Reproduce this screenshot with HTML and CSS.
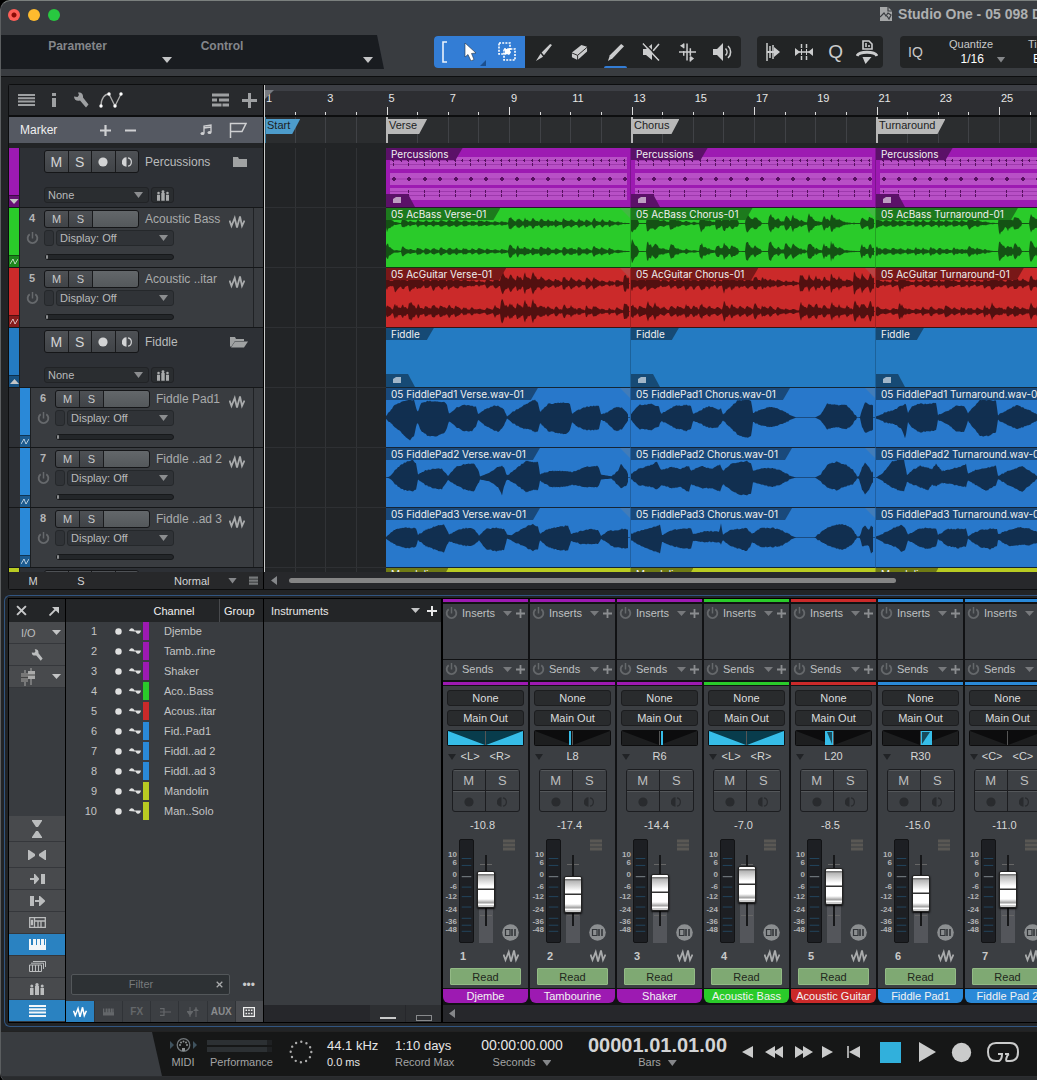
FILE: index.html
```
<!DOCTYPE html>
<html lang="en">
<head>
<meta charset="utf-8">
<title>Studio One - 05 098 D</title>
<link rel="stylesheet" href="styles.css">
</head>
<body>
<svg class="sprite" aria-hidden="true">
  <symbol id="lines" viewBox="0 0 17 12"><path d="M0 1h17M0 4.300h17M0 7.600h17M0 11h17" stroke="currentColor" stroke-width="2"/></symbol>
  <symbol id="bars3" viewBox="0 0 12 12"><path d="M0 2h12M0 6h12M0 10h12" stroke="currentColor" stroke-width="3"/></symbol>
  <symbol id="info" viewBox="0 0 6 16"><path d="M1 1h4v3H1zM1 6h4v9H1z" fill="currentColor"/></symbol>
  <symbol id="wrench" viewBox="0 0 16 16"><path d="M1 4.500 4.500 5 6 3 5 .5C8 0 10.500 2 10 5.500L15.500 12.500 13 15.500 7 8.500C4 9.500 1 8 1 4.500z" fill="currentColor"/></symbol>
  <symbol id="curve" viewBox="0 0 24 16"><path d="M2 14C2 6 6 2 10 2L16 14 22 2" fill="none" stroke="#aaa" stroke-width="1.300"/><g fill="#fff"><circle cx="2" cy="14" r="1.700"/><circle cx="10" cy="2" r="1.700"/><circle cx="16" cy="14" r="1.700"/><circle cx="22" cy="2" r="1.700"/></g></symbol>
  <symbol id="tracks" viewBox="0 0 17 14"><path d="M0 2h17M0 7h5M7 7h10M0 12h17" stroke="currentColor" stroke-width="3"/><path d="M10 10v4" stroke="#282a2d"/></symbol>
  <symbol id="plus" viewBox="0 0 12 12"><path d="M6 0v12M0 6h12" stroke="currentColor" stroke-width="2.400"/></symbol>
  <symbol id="minus" viewBox="0 0 12 12"><path d="M0 6h12" stroke="currentColor" stroke-width="2"/></symbol>
  <symbol id="notes" viewBox="0 0 12 12"><path d="M4 9V2l7-1v7M4 4l7-1" fill="none" stroke="currentColor" stroke-width="1.300"/><ellipse cx="2.500" cy="9.500" rx="2" ry="1.500" fill="currentColor"/><ellipse cx="9.500" cy="8.500" rx="2" ry="1.500" fill="currentColor"/></symbol>
  <symbol id="flag" viewBox="0 0 18 16"><path d="M1.500 16V1.500H17L13 9.500H2" fill="none" stroke="currentColor" stroke-width="1.500"/></symbol>
  <symbol id="folder" viewBox="0 0 18 12"><path d="M3 11V1h5l1 2h8v8z" fill="currentColor"/></symbol>
  <symbol id="folderopen" viewBox="0 0 18 12"><path d="M0 10V1h5l1 2h8v2H5L1 11z" fill="currentColor"/><path d="M5 5.500h13L14 11.500H1z" fill="currentColor"/></symbol>
  <symbol id="players" viewBox="0 0 14 12"><path d="M0 5h3.500v7H0zM5 3h4v9H5zM10.500 5H14v7h-3.500z" fill="currentColor"/><circle cx="1.800" cy="3" r="1.500" fill="currentColor"/><circle cx="7" cy="1.700" r="1.700" fill="currentColor"/><circle cx="12.200" cy="3" r="1.500" fill="currentColor"/></symbol>
  <symbol id="power" viewBox="0 0 14 14"><path d="M4 2.500a5.200 5.200 0 1 0 6 0" fill="none" stroke="currentColor" stroke-width="2"/><path d="M7 0v7" stroke="currentColor" stroke-width="1.600"/></symbol>
  <symbol id="wave" viewBox="0 0 16 14"><path d="M.5 5.500 2.500 11 5.700 3 8 12.500 11 1.500 13 11 15.500 5.500" fill="none" stroke="currentColor" stroke-width="1.800"/></symbol>
  <symbol id="env" viewBox="0 0 8 7"><path d="M0 6 3 1 5 6 8 1" fill="none" stroke="currentColor"/></symbol>
  <symbol id="dot" viewBox="0 0 10 10"><circle cx="5" cy="5" r="4.600" fill="currentColor"/></symbol>
  <symbol id="monitor" viewBox="0 0 10 10"><path d="M4.500.3a4.700 4.700 0 0 0 0 9.400z" fill="currentColor"/><path d="M6 .8a4.300 4.300 0 0 1 0 8.400" fill="none" stroke="currentColor" stroke-width="1.200"/></symbol>
  <symbol id="sine" viewBox="0 0 12 8"><path d="M0 4C1 .5 4 .5 5.500 3.500H12C11 8 8 7.500 6.500 4.500H5z" fill="currentColor"/></symbol>
  <symbol id="close" viewBox="0 0 10 10"><path d="M1 1l8 8M9 1 1 9" stroke="currentColor" stroke-width="1.800"/></symbol>
  <symbol id="popout" viewBox="0 0 10 10"><path d="M.5 9.500 7 3" stroke="currentColor" stroke-width="1.800"/><path d="M3 1h7v6.500z" fill="currentColor"/></symbol>
  <symbol id="faders" viewBox="0 0 14 18"><path d="M4 2v16M10 0v17" stroke="#999" stroke-width="1.200"/><path d="M0 5h7v9H0z" fill="#777"/><path d="M7 3h7v8H7z" fill="#aaa"/><path d="M0 9.500h7M7 7h7" stroke="#444"/></symbol>
  <symbol id="vshrink" viewBox="0 0 10 18"><path d="M0 0h10v1L6 7H4L0 1zM0 18h10v-1l-4-6H4l-4 6z" fill="currentColor"/></symbol>
  <symbol id="hshrink" viewBox="0 0 18 10"><path d="M0 0v10h1l6-4V4L1 0zM18 0v10h-1l-6-4V4l6-4z" fill="currentColor"/></symbol>
  <symbol id="inport" viewBox="0 0 15 10"><path d="M0 4h4V0h1l4 4.500v1L5 10H4V6H0zM11 0h4v10h-4z" fill="currentColor"/></symbol>
  <symbol id="outport" viewBox="0 0 15 10"><path d="M0 0h4v10H0zM5 4h4V0h1l5 4.500v1L10 10H9V6H5z" fill="currentColor"/></symbol>
  <symbol id="console" viewBox="0 0 17 11"><path d="M.7.7h15.600v9.600H.7zM5.500 1v9M6 4h10M9 4v6M12 4v6M2.500 3.500h1v4h-1z" fill="none" stroke="currentColor" stroke-width="1.300"/></symbol>
  <symbol id="keys" viewBox="0 0 17 11"><path d="M0 0h2v6h2V0h3v6h1V0h3v6h1V0h3v6h1V0h1v11H0z" fill="currentColor"/></symbol>
  <symbol id="stack" viewBox="0 0 17 11"><path d="M.5 4h12v6.500H.5zM3.500 4v6M6.500 4v6M9.500 4v6M2 2.200h12.500V8M4 .5h12.500V6" fill="none" stroke="currentColor"/></symbol>
  <symbol id="bus" viewBox="0 0 12 8"><path d="M1 .7h4v6.600H1M1 4h11" fill="none" stroke="currentColor" stroke-width="1.200"/></symbol>
  <symbol id="vca" viewBox="0 0 12 10"><path d="M3 0v10M9 0v10" stroke="currentColor"/><path d="M0 5h6L3 9zM6 4h6L9 1zM0 4h6v1H0z" fill="currentColor"/></symbol>
  <symbol id="grid" viewBox="0 0 12 10"><path d="M.6.600h10.800v8.800H.6z" fill="none" stroke="currentColor" stroke-width="1.200"/><path d="M2.500 3.300h7M2.500 6.500h7" stroke="currentColor" stroke-width="1.600" stroke-dasharray="1.600 1.100"/></symbol>
  <symbol id="link" viewBox="0 0 17 17"><circle cx="8.500" cy="8.500" r="8.300" fill="#8b8e90"/><path d="M3.500 5.500H8v6H3.500z" fill="none" stroke="#33363a" stroke-width="1.200"/><path d="M10 5v7M13 5v7" stroke="#33363a" stroke-width="1.600"/></symbol>
  <symbol id="doc" viewBox="0 0 12 14"><path d="M0 0h8l4 4v10H0z" fill="#a5a7a8"/><path d="M8 0v4h4M0 10l4-4 2 3 2-3 3 2-2 4-2-3" fill="none" stroke="#393c40" stroke-width="1.200"/></symbol>
  <symbol id="bracket" viewBox="0 0 6 22"><path d="M6 1H2v20h4" fill="none" stroke="currentColor" stroke-width="1.600"/></symbol>
  <symbol id="pointer" viewBox="0 0 12 18"><path d="M1 0v14l3-2.500L7 18l3-1.500L7.500 10.500 12 10z" fill="#fff" stroke="#234" stroke-width=".6"/></symbol>
  <symbol id="range" viewBox="0 0 18 20"><path d="M1 1h11v11H1zM6 7h11v11H6z" fill="none" stroke="#fff" stroke-width="1.600" stroke-dasharray="2 1.200"/><path d="M7 7h5v5H7z" fill="#fff"/></symbol>
  <symbol id="knife" viewBox="0 0 18 18"><path d="M18 1 16 0 7 9l2.500 3zM6 10 1 18l7.500-4.500z" fill="currentColor"/></symbol>
  <symbol id="eraser" viewBox="0 0 18 18"><path d="M11 1 17 3v5L7 17 1 14V9z" fill="currentColor"/><path d="M1 9.500 7 12 17 3.500M7 12v5" fill="none" stroke="#222" stroke-width="1"/></symbol>
  <symbol id="pencil" viewBox="0 0 18 18"><path d="M15 0l3 2.500L6 15l-5 3 2-6z" fill="currentColor"/></symbol>
  <symbol id="mute" viewBox="0 0 18 18"><path d="M1 6h3l6-5v16l-6-5H1z" fill="currentColor"/><path d="M17 1 11 8M1 .5l16 17" stroke="currentColor" stroke-width="1.600"/><path d="M2.500 0 18 16" stroke="#222" stroke-width="1.400"/></symbol>
  <symbol id="bend" viewBox="0 0 18 20"><path d="M0 10h18M5 1v5M5 9v5M8.500 1v18M12 6v8M12 15v5" stroke="currentColor" stroke-width="1.600"/><path d="M5 1v5L1 3.500zM12 14v6l4-3zM14 9v3" fill="currentColor"/></symbol>
  <symbol id="speaker" viewBox="0 0 20 18"><path d="M0 6h4l6-6v18l-6-6H0z" fill="currentColor"/><path d="M12.500 5.500c2 2 2 5 0 7M15 3c3.500 3 3.500 9 0 12" fill="none" stroke="currentColor" stroke-width="1.600"/></symbol>
  <symbol id="stripsil" viewBox="0 0 14 18"><path d="M1 0v18M4 3v12M7 2v14" stroke="currentColor" stroke-width="1.500"/><path d="M1 8h12v2H1zM8 4l6 5-6 5z" fill="currentColor"/></symbol>
  <symbol id="stretch" viewBox="0 0 18 18"><path d="M0 9h18M6.500 1v4M6.500 13v4M11.500 1v4M11.500 13v4" stroke="currentColor" stroke-width="1.500"/><path d="M0 5l5 4-5 4zM18 5l-5 4 5 4z" fill="currentColor"/><path d="M6.500 6v6M11.500 6v6" stroke="currentColor"/></symbol>
  <symbol id="macro" viewBox="0 0 22 24"><path d="M7 1h6l3 3v5H7zM10 3v4M13 5v2" fill="none" stroke="currentColor" stroke-width="1.600"/><path d="M1 16c2-5 18-5 20 0" fill="none" stroke="currentColor" stroke-width="3"/><path d="M6.500 17h9l-6 7z" fill="currentColor"/></symbol>
  <symbol id="din" viewBox="0 0 27 14"><path d="M0 3v8l4-4zM23 3v8l4-4z" fill="#3f525e"/><circle cx="13.500" cy="7" r="6.300" fill="none" stroke="#70767a" stroke-width="1.300"/><g fill="#8b9092"><circle cx="10" cy="7" r="1"/><circle cx="11" cy="4.500" r="1"/><circle cx="13.500" cy="3.500" r="1"/><circle cx="16" cy="4.500" r="1"/><circle cx="17" cy="7" r="1"/><path d="M12 10h3v3h-3z"/></g></symbol>
  <symbol id="prev" viewBox="0 0 11 12"><path d="M0 6 11 0v12z" fill="currentColor"/></symbol>
  <symbol id="next" viewBox="0 0 11 12"><path d="M11 6 0 0v12z" fill="currentColor"/></symbol>
  <symbol id="rew" viewBox="0 0 18 12"><path d="M0 6 10 0v5l8-5v12l-8-5v5z" fill="currentColor"/></symbol>
  <symbol id="fwd" viewBox="0 0 18 12"><path d="M18 6 8 0v5L0 0v12l8-5v5z" fill="currentColor"/></symbol>
  <symbol id="rtz" viewBox="0 0 13 12"><path d="M1 0v12" stroke="currentColor" stroke-width="1.600"/><path d="M2 6 13 0v12z" fill="currentColor"/></symbol>
  <symbol id="play" viewBox="0 0 17 20"><path d="M0 0 17 10 0 20z" fill="currentColor"/></symbol>
  <symbol id="loop" viewBox="0 0 32 20"><path d="M9 19C3 19 1 15 1 10s2-9 8-9h14c6 0 8 4 8 9s-2 9-8 9h-3c-2 0 0-6 2-7M9 19h3c2-1 3-3 3-7h-4M22 12l-4 0" fill="none" stroke="currentColor" stroke-width="2"/></symbol>
</svg>

<div class="window">
  <header class="titlebar">
    <button class="light red" aria-label="Close"></button><button class="light amber" aria-label="Minimise"></button><button class="light lime" aria-label="Zoom"></button>
    <h1 class="title"><svg width="12" height="14"><use href="#doc"/></svg>Studio One - 05 098 D</h1>
  </header>

  <div class="toolbar">
    <div class="params">
      <button class="param"><span>Parameter</span><i class="tri"></i></button>
      <button class="param wide"><span>Control</span><i class="tri"></i></button>
    </div>
    <div class="tools" role="toolbar" aria-label="Tools">
      <div class="selected">
        <svg width="6" height="22"><use href="#bracket"/></svg>
        <button aria-label="Arrow"><svg width="12" height="18"><use href="#pointer"/></svg></button>
        <button aria-label="Range"><svg width="18" height="20"><use href="#range"/></svg></button>
      </div>
      <button aria-label="Split"><svg width="17" height="17"><use href="#knife"/></svg></button>
      <button aria-label="Eraser"><svg width="17" height="17"><use href="#eraser"/></svg></button>
      <button class="paint" aria-label="Paint"><svg width="17" height="17"><use href="#pencil"/></svg></button>
      <button aria-label="Mute"><svg width="18" height="18"><use href="#mute"/></svg></button>
      <button aria-label="Bend"><svg width="17" height="20"><use href="#bend"/></svg></button>
      <button aria-label="Listen"><svg width="20" height="18"><use href="#speaker"/></svg></button>
    </div>
    <div class="tools narrow" role="toolbar" aria-label="Actions">
      <button aria-label="Strip silence"><svg width="14" height="18"><use href="#stripsil"/></svg></button>
      <button aria-label="Stretch"><svg width="18" height="18"><use href="#stretch"/></svg></button>
      <button class="letter">Q</button>
      <button aria-label="Macro"><svg width="22" height="24"><use href="#macro"/></svg></button>
    </div>
    <div class="quantize">
      <button class="iq">IQ</button>
      <label class="q"><span>Quantize</span><span class="pick"><select><option>1/16</option></select><i class="tri dim"></i></span></label>
      <label class="tb"><span>Timebase</span><select><option>Beats</option></select></label>
    </div>
  </div>

  <main class="workspace">
    <section class="arrange" aria-label="Arrangement">
      <div class="tracklist">
        <div class="listtools">
          <button aria-label="Track list"><svg width="17" height="12"><use href="#lines"/></svg></button>
          <button aria-label="Inspector"><svg width="6" height="16"><use href="#info"/></svg></button>
          <button aria-label="Options"><svg width="16" height="16"><use href="#wrench"/></svg></button>
          <button aria-label="Automation"><svg width="24" height="16"><use href="#curve"/></svg></button>
          <button class="push" aria-label="Layers"><svg width="17" height="14"><use href="#tracks"/></svg></button>
          <button aria-label="Add tracks"><svg width="15" height="15"><use href="#plus"/></svg></button>
        </div>
        <div class="markerhead">
          <span>Marker</span>
          <button aria-label="Add marker"><svg width="11" height="11"><use href="#plus"/></svg></button>
          <button aria-label="Remove marker"><svg width="11" height="11"><use href="#minus"/></svg></button>
          <button class="push" aria-label="Tempo"><svg width="12" height="12"><use href="#notes"/></svg></button>
          <button aria-label="Markers"><svg width="18" height="16"><use href="#flag"/></svg></button>
        </div>
        <div class="heads" id="heads"></div>
        <div class="listfoot">
          <button>M</button><button>S</button>
          <label class="size"><select aria-label="Track height"><option>Normal</option></select><i class="tri dim"></i></label>
          <svg width="9" height="9"><use href="#bars3"/></svg>
        </div>
      </div>
      <div class="timeline">
        <div class="ruler" id="ruler"></div>
        <div class="markers" id="markers"></div>
        <div class="lanes" id="lanes"></div>
        <div class="playhead"></div>
        <div class="hscroll"><button aria-label="Scroll left"><i class="tri left"></i></button><div class="thumb"></div></div>
      </div>
    </section>

    <section class="frame" aria-label="Console">
      <div class="mix">
        <nav class="side">
          <div class="sidehead"><button aria-label="Close"><svg width="11" height="11"><use href="#close"/></svg></button><button aria-label="Detach"><svg width="10" height="10"><use href="#popout"/></svg></button></div>
          <button class="sb"><span>I/O</span><i class="tri small"></i></button>
          <button class="sb mid" aria-label="Options"><svg width="12" height="12"><use href="#wrench"/></svg></button>
          <button class="sb" aria-label="Fader view"><svg width="14" height="18"><use href="#faders"/></svg><i class="tri small"></i></button>
          <button class="sb mid tall push-down" aria-label="Narrow"><svg width="10" height="18"><use href="#vshrink"/></svg></button>
          <button class="sb mid tall" aria-label="Width"><svg width="18" height="10"><use href="#hshrink"/></svg></button>
          <button class="sb mid" aria-label="Inputs"><svg width="15" height="10"><use href="#inport"/></svg></button>
          <button class="sb mid" aria-label="Outputs"><svg width="15" height="10"><use href="#outport"/></svg></button>
          <button class="sb mid" aria-label="External"><svg width="17" height="11"><use href="#console"/></svg></button>
          <button class="sb mid on" aria-label="Instruments"><svg width="17" height="11"><use href="#keys"/></svg></button>
          <button class="sb mid" aria-label="Groups"><svg width="17" height="11"><use href="#stack"/></svg></button>
          <button class="sb mid" aria-label="Scenes"><svg width="14" height="12"><use href="#players"/></svg></button>
          <button class="sb mid on" aria-label="Channel list"><svg width="17" height="12"><use href="#lines"/></svg></button>
        </nav>
        <div class="channels">
          <table>
            <colgroup><col class="c-num"><col class="c-tick"><col class="c-dot"><col class="c-wave"><col class="c-col"><col class="c-name"><col class="c-group"></colgroup>
            <thead><tr><th colspan="6">Channel</th><th class="grp">Group</th></tr></thead>
            <tbody id="rows"></tbody>
          </table>
          <div class="filter"><div class="field"><input type="text" placeholder="Filter" aria-label="Filter"><button aria-label="Clear"><svg width="7" height="7"><use href="#close"/></svg></button></div><button class="more" aria-label="More">•••</button></div>
          <div class="tabs">
            <button class="on" aria-label="Audio"><svg width="14" height="12"><use href="#wave"/></svg></button>
            <button aria-label="Instrument"><svg width="11" height="8"><use href="#keys"/></svg></button>
            <button>FX</button>
            <button aria-label="Bus"><svg width="12" height="8"><use href="#bus"/></svg></button>
            <button aria-label="VCA"><svg width="12" height="10"><use href="#vca"/></svg></button>
            <button class="aux">AUX</button>
            <button class="lit" aria-label="All"><svg width="12" height="10"><use href="#grid"/></svg></button>
          </div>
        </div>
        <div class="instruments">
          <div class="insthead"><span>Instruments</span><button aria-label="Menu"><i class="tri small"></i></button><button aria-label="Add"><svg width="10" height="10"><use href="#plus"/></svg></button></div>
          <div class="instfoot"><button aria-label="Compact"><i class="dash"></i></button><button aria-label="Expanded"><i class="box"></i></button></div>
        </div>
        <div class="stripsarea">
          <div class="strips" id="strips"></div>
          <div class="stripscroll"><button aria-label="Scroll left"><i class="tri left"></i></button></div>
        </div>
      </div>
    </section>
  </main>

  <footer class="transport">
    <div class="tbody">
      <div class="cell midi"><svg width="27" height="14"><use href="#din"/></svg><span>MIDI</span></div>
      <div class="cell perf"><i class="meter"></i><i class="meter"></i><span>Performance</span></div>
      <svg class="ring" width="24" height="24" viewBox="0 0 24 24"><circle cx="12" cy="12" r="10.300" fill="none" stroke="#aaa" stroke-width="2.400" stroke-linecap="round" stroke-dasharray="0 5.393"/></svg>
      <div class="cell rate"><b>44.1 kHz</b><em>0.0 ms</em></div>
      <div class="cell days"><b>1:10 days</b><span>Record Max</span></div>
      <div class="cell secs"><b>00:00:00.000</b><span>Seconds<i class="tri dim"></i></span></div>
      <div class="cell time"><b>00001.01.01.00</b><span>Bars<i class="tri dim"></i></span></div>
      <div class="controls">
        <button aria-label="Previous"><svg width="11" height="12"><use href="#prev"/></svg></button>
        <button aria-label="Rewind"><svg width="18" height="12"><use href="#rew"/></svg></button>
        <button aria-label="Forward"><svg width="18" height="12"><use href="#fwd"/></svg></button>
        <button aria-label="Next"><svg width="11" height="12"><use href="#next"/></svg></button>
        <button aria-label="Return to zero"><svg width="13" height="12"><use href="#rtz"/></svg></button>
        <button class="stop" aria-label="Stop"></button>
        <button aria-label="Play"><svg width="17" height="20"><use href="#play"/></svg></button>
        <button class="rec" aria-label="Record"><svg width="21" height="21"><use href="#dot"/></svg></button>
        <button class="rec" aria-label="Loop"><svg width="32" height="20"><use href="#loop"/></svg></button>
      </div>
    </div>
  </footer>
</div>
<script src="app.js"></script>
</body>
</html>
```

FILE: styles.css
```
:root {
  --bar: calc(245px / 8);
  --panel: #393c40;
  --dark: #232527;
  --line: #0d0e0f;
}
* { box-sizing: border-box; }
body { margin: 0; background: #000; color: #c8c9ca; font: 11px/14px "Liberation Sans", Arial, sans-serif; }
button, select, input { font: inherit; color: inherit; background: none; border: 0; padding: 0; margin: 0; border-radius: 0; appearance: none; outline: 0; }
button { display: flex; align-items: center; justify-content: center; }
svg { display: block; flex: none; }
.sprite { position: absolute; width: 0; height: 0; }
table { border-collapse: collapse; table-layout: fixed; width: 100%; }

.window { display: flex; flex-direction: column; min-height: 100vh; overflow: hidden; background: var(--panel); border-top: 1px solid #7b807e; border-left: 1px solid #5b5e60; border-radius: 10px 0 0 10px; }
.tri { display: inline-block; flex: none; width: 10px; height: 6px; background: #c4c5c6; clip-path: polygon(0 0, 100% 0, 50% 100%); }
.tri.small { width: 9px; height: 5px; }
.tri.dim { width: 9px; height: 6px; background: #85878a; }
.tri.left { width: 6px; height: 9px; background: #85878a; clip-path: polygon(100% 0, 100% 100%, 0 50%); }

/* title bar and tools */
.titlebar { display: flex; align-items: center; height: 27px; padding-left: 7px; gap: 8px; overflow: hidden; }
.light { width: 12px; height: 12px; border-radius: 50%; }
.red { background: radial-gradient(circle, #8b0b06 2px, #fe5e57 3px); }
.amber { background: #febb2e; }
.lime { background: #28c840; }
.title { display: flex; align-items: center; gap: 6px; margin: 0 -5px 0 auto; padding-bottom: 2px; font-size: 14px; line-height: 16px; color: #aeb0b1; white-space: nowrap; }
.toolbar { display: flex; align-items: center; height: 48px; overflow: hidden; }
.params { display: flex; flex: none; width: 383px; height: 34px; margin-right: 50px; background: #191c20; clip-path: polygon(0 0, 376px 0, 100% 100%, 0 100%); }
.param { position: relative; align-items: flex-start; width: 153px; padding-top: 4px; font-size: 12px; font-weight: bold; color: #84868a; }
.param.wide { width: 136px; }
.param .tri { position: absolute; right: -18px; bottom: 6px; }
.param.wide .tri { right: -83px; }
.tools { display: flex; flex: none; height: 32px; margin-right: 16px; background: #222425; border-radius: 4px; overflow: hidden; color: #cbcccd; }
.tools button { width: 36px; }
.selected { display: flex; align-items: center; width: 91px; padding-left: 7px; background: #337dd5; color: #eaf2fb; position: relative; }
.selected::after { content: ""; position: absolute; left: 46px; bottom: 2px; width: 6px; height: 6px; background: #1c4f8d; clip-path: polygon(100% 0, 100% 100%, 0 100%); }
.selected button { width: 37px; height: 32px; }
.selected button:nth-of-type(1) { margin-left: 4px; }
.paint { position: relative; }
.paint::after { content: ""; position: absolute; left: 7px; right: 6px; bottom: 0; height: 2px; background: #337dd5; border-radius: 2px 2px 0 0; }
.tools.narrow { width: 126px; margin-right: 17px; }
.tools.narrow button { flex: 1; }
.tools .letter { font-size: 19px; }
.quantize { display: flex; flex: 1; min-width: 0; align-items: center; height: 32px; background: #222425; border-radius: 4px 0 0 4px; overflow: hidden; }
.iq { flex: none; width: 31px; font-size: 14px; }
.q { display: flex; flex: none; flex-direction: column; align-items: center; width: 80px; line-height: 15px; }
.pick { display: flex; align-items: center; gap: 12px; padding-left: 24px; }
.q select { height: 15px; width: 24px; font-size: 12px; color: #fff; }
.tb { display: flex; flex: none; flex-direction: column; width: 60px; margin-left: 17px; line-height: 15px; }
.tb select { height: 15px; padding-left: 5px; font-size: 12px; color: #fff; }

/* arrangement */
.workspace { display: flex; flex-direction: column; flex: 1; padding-top: 7px; background: #222426; border-top: 1px solid var(--line); }
.arrange { display: grid; grid-template-columns: 255px minmax(0, 1fr); margin-left: 7px; border: 1px solid var(--line); border-right: 0; border-radius: 3px 0 0 3px; }
.tracklist { border-right: 1px solid #000; }
.listtools { display: flex; align-items: center; gap: 16px; height: 30px; padding: 0 6px 0 9px; background: #282a2d; color: #9ea0a2; }
.listtools button:nth-child(4) { margin-left: -6px; }
.listtools .push, .markerhead .push { margin-left: auto; }
.listtools button:nth-child(6) { margin-left: -3px; }
.markerhead { display: flex; align-items: center; gap: 14px; height: 28px; margin-bottom: 5px; padding: 0 16px 0 11px; border-top: 2px solid var(--line); background: #555962; color: #cfd0d2; }
.markerhead span { width: 66px; font-size: 12px; color: #f0f0f0; }
.markerhead button:nth-of-type(4) { margin-left: 3px; }
.heads { height: 424px; overflow: hidden; background: #2d3035; }
.head { display: grid; grid-template-columns: 10px minmax(0, 1fr); height: 60px; border-bottom: 1px solid #151719; }
.head.child { padding-left: 11px; }
.strip-col { display: flex; flex-direction: column; justify-content: flex-end; }
.strip-col > span { display: flex; align-items: center; justify-content: center; height: 12px; border-top: 1px solid #0006; background: #0005; color: #fffa; }
.up { transform: rotate(180deg); }
.hbody { display: grid; grid-template-columns: 24px 95px minmax(0, 1fr); align-content: start; border-left: 1px solid #1c1e20; }
.head.audio .hbody { background: linear-gradient(90deg, var(--panel) 0 calc(100% - 10px), #202225 0 calc(100% - 9px), var(--panel) 0); }
.num { padding-top: 3px; text-align: center; font-weight: bold; color: #b4b5b6; }
.msr { display: grid; margin-top: 2px; height: 18px; grid-template-columns: 23px 23px 1fr; border: 1px solid #151618; border-radius: 3px; background: #1a1b1d; gap: 1px; overflow: hidden; color: #c9cacb; }
.msr > * { background: linear-gradient(#4e5155, #404347); }
.msr .lvl { background: linear-gradient(#63676a, #54585b); }
.group .msr { height: 23px; grid-template-columns: repeat(4, 1fr); font-size: 14px; color: #d3d4d5; }
.nm { display: flex; align-items: center; justify-content: space-between; height: 22px; padding: 0 18px 0 6px; font-size: 12px; color: #a9abac; white-space: nowrap; }
.group .nm { height: 27px; padding-right: 15px; color: #b9bbbc; }
.group .nm svg { color: #a0a2a3; }
.audio .nm svg { margin-top: 6px; }
.pw { margin-top: 1px; color: #66696c; justify-self: center; }
.under { grid-column: 2 / 4; display: grid; grid-template-columns: 10px minmax(0, 1fr); gap: 2px; height: 16px; margin: 0 89px 0 0; }
.under > * { border: 1px solid #25282b; border-radius: 3px; background: #303337; }
.drop { display: flex; align-items: center; padding: 0 5px 0 3px; color: #b9babb; }
.drop select { flex: 1; min-width: 0; height: 14px; }
.drop .tri { background: #8b8d8f; }
.group .under { grid-template-columns: minmax(0, 1fr) 23px; margin-top: 12px; }
.group .under > button { color: #a9abac; }
.group .under > * { background: #2a2d30; border-color: #212326; }
.vol { grid-column: 2 / 4; height: 6px; margin: 8px 89px 0 1px; border: 1px solid #17191b; border-radius: 3px; background: #232629; }
.vol::-webkit-slider-thumb { appearance: none; width: 2px; height: 4px; background: #8b8d8f; border-radius: 1px; }
.listfoot { display: flex; align-items: center; height: 17px; background: #27282a; color: #d3d4d5; }
.listfoot button { flex: none; width: 48px; }
.listfoot svg { margin-left: 12px; color: #77797b; }
.size { display: flex; align-items: center; margin-left: 69px; gap: 14px; }
.size select { height: 14px; width: 40px; }
.timeline { position: relative; display: flex; flex-direction: column; min-width: 0; overflow: hidden; background: #222426; }
.playhead { position: absolute; left: 0; top: 0; bottom: 17px; width: 1px; background: #c9caca; }
.playhead::before { content: ""; position: absolute; left: 1px; top: 5px; width: 9px; height: 9px; background: #777a80; clip-path: polygon(0 0, 100% 0, 0 100%); }
.ruler { display: flex; height: 30px; border-top: 6px solid #3d3f45; background: #2d2e32; }
.bar2 { flex: none; width: calc(var(--bar) * 2); padding: 0 0 0 2px; font-size: 11px; color: #e6e6e6;
  background: linear-gradient(#ddd, #ddd) 0 100% / 1px 3px no-repeat, linear-gradient(#ddd, #ddd) var(--bar) 100% / 1px 3px no-repeat; }
.bar2.long { background-size: 1px 8px, 1px 3px; }
.markers { display: flex; height: 28px; margin-bottom: 5px; border-top: 2px solid var(--line); background: repeating-linear-gradient(90deg, #404246 0 1px, #2b2d2f 1px var(--bar)); }
.mk { flex: none; width: 245px; border-left: 2px solid #b7b7b7; padding-top: 1px; }
.mk.start { width: 122px; border-color: #2f7397; }
.mk span { display: inline-block; height: 15px; padding: 0 10px 0 1px; line-height: 13px; background: #b8b8b8; color: #1d1e1f; clip-path: polygon(0 0, 100% 0, calc(100% - 8px) 100%, 0 100%); }
.mk.start span { background: #4d9ccb; }
.lanes { height: 424px; overflow: hidden; background: repeating-linear-gradient(90deg, #313336 0 1px, transparent 1px var(--bar)); }
.lane { display: flex; height: 60px; padding-left: 122px; border-bottom: 1px solid #2e3033; }
.clip { position: relative; flex: none; width: 245px; height: 60px; overflow: hidden; border-right: 1px solid #0003; border-bottom: 1px solid #111c; font: 10px/12px Inter, sans-serif; color: #f1f1f1; white-space: nowrap; }
.clip svg { position: absolute; left: 0; top: 0; }
.clip b { position: relative; display: inline-block; height: 12px; padding: 0 14px 0 5px; font-weight: 400; clip-path: polygon(0 0, 100% 0, calc(100% - 7px) 100%, 0 100%); }
.ftab { position: absolute; left: 0; bottom: 0; width: 29px; height: 13px; clip-path: polygon(0 0, 22px 0, 29px 100%, 0 100%); }
.ftab::after { content: ""; position: absolute; left: 7px; top: 3px; width: 8px; height: 6px; background: #fff9; clip-path: polygon(0 2px, 3px 0, 100% 0, 100% 100%, 0 100%); }
.hscroll { display: flex; align-items: center; height: 17px; padding-left: 7px; background: #27282b; }
.thumb { width: 607px; height: 5px; margin-left: 12px; border-radius: 3px; background: #858585; }

/* console */
.frame { display: flex; flex: 1; margin: 5px 0 4px 3px; padding: 2px 0 3px 3px; border: 1px solid #315580; border-right: 0; border-radius: 6px 0 0 6px; }
.mix { flex: 1; display: grid; grid-template-columns: 56px 197px 177px minmax(0, 1fr); column-gap: 1px; border: 1px solid #000; border-right: 0; background: #000; }
.side { display: flex; flex-direction: column; background: var(--panel); }
.sidehead { display: flex; align-items: center; justify-content: space-between; height: 23px; padding: 0 6px 0 7px; background: var(--dark); }
.sb { justify-content: space-between; height: 22px; padding: 0 4px 0 12px; border-bottom: 1px solid #35373b; background: #484a4d; color: #bbbdbe; }
.sb.mid { justify-content: center; padding: 0; }
.sb.tall { height: 26px; }
.sb.on { background: #2a82c1; color: #f2f6f9; }
.push-down { margin-top: auto; }
.channels { display: flex; flex-direction: column; background: var(--panel); }
.channels th { height: 23px; padding: 0 24px 0 0; text-align: right; font-weight: 400; color: #f0f0f0; background: var(--dark); }
.channels th.grp { padding: 0 4px 0 0; text-align: center; border-left: 1px solid #484a4d; }
.c-num { width: 31px; } .c-tick { width: 12px; } .c-dot { width: 18px; } .c-wave { width: 16px; } .c-col { width: 6px; } .c-name { width: 70px; } .c-group { width: 44px; }
.channels td { height: 20px; padding: 0 0 2px; color: #c3c4c5; }
.channels td:first-child { text-align: right; }
.channels td svg { margin: auto; color: #dfe0e0; }
.channels td i { display: block; height: 18px; }
.channels td.name { padding-left: 15px; }
.filter { display: flex; align-items: center; margin-top: auto; padding: 0 8px 6px 5px; }
.field { display: flex; align-items: center; width: 159px; height: 21px; border: 1px solid #53575a; border-radius: 2px; background: #2d3134; }
.field input { flex: 1; width: 0; height: 17px; padding-bottom: 2px; text-align: center; }
.field input::placeholder { color: #777a7c; opacity: 1; }
.field button { width: 19px; color: #a9abac; }
.more { margin-left: auto; font-size: 12px; }
.tabs { display: grid; grid-template-columns: 28px repeat(6, 1fr); gap: 1px; height: 21px; background: #303337; font-weight: bold; color: #64676a; }
.tabs button { background: #3c3f43; font-size: 10px; }
.tabs .on { background: #2a82c1; color: #fff; }
.tabs .aux { color: #8a8c8e; }
.tabs .lit { background: #4b4d51; color: #f0f0f0; }
.instruments { display: flex; flex-direction: column; justify-content: space-between; background: var(--panel); }
.insthead { display: flex; align-items: center; gap: 7px; height: 23px; padding: 0 4px 0 7px; background: var(--dark); color: #e8e8e8; }
.insthead span { flex: 1; }
.instfoot { display: flex; justify-content: flex-end; gap: 1px; height: 17px; background: #26272b; }
.instfoot button { width: 35px; padding-top: 8px; background: #2d2f32; }
.dash { width: 16px; height: 2px; background: #c9caca; }
.box { width: 16px; height: 6px; border: 1px solid #888a8c; }
.stripsarea { display: flex; flex-direction: column; min-width: 0; padding-left: 1px; }
.strips { display: flex; flex: 1; gap: 2px; overflow: hidden; background: #111214; }
.strip { display: flex; flex-direction: column; flex: none; width: 85px; }
.cbar { height: 3px; margin-bottom: 1px; }
.rack { display: flex; align-items: flex-start; gap: 4px; padding: 2px 3px 0 2px; background: #3b3e42; color: #bfc0c1; }
.rack > svg { margin-top: 1px; }
.rack > svg, .rack button { height: 13px; color: #65686b; }
.rack span { flex: 1; line-height: 15px; }
.rack button { margin-left: 2px; padding-top: 2px; color: #8b8d90; }
.rack button + button { margin-left: 0; }
.rack .tri { background: #77797c; }
.inserts { flex: 1 0 56px; margin-bottom: 1px; border-top: 1px solid #111; }
.sends { height: 20px; margin-bottom: 2px; }
.sbody { display: flex; flex-direction: column; align-items: center; padding: 4px 4px 3px; background: #3b3e42; }
.route { width: 77px; height: 16px; margin-bottom: 4px; border: 1px solid #1c1d1f; border-radius: 3px; background: #292b2d; color: #dcdddd; }
.panner { border-radius: 2px; }
.pan { position: relative; display: flex; justify-content: center; gap: 10px; width: 100%; height: 20px; padding-top: 3px; color: #d6d7d7; white-space: nowrap; }
.pan .tri { position: absolute; left: 1px; top: 8px; width: 8px; background: #212326; }
.grid4 { display: grid; grid-template-columns: 1fr 1fr; grid-template-rows: 20px 20px; gap: 1px; width: 68px; height: 43px; margin-top: 3px; border: 1px solid #1c1d20; border-radius: 3px; background: #1c1d20; overflow: hidden; font-size: 13px; color: #bcbdbe; }
.grid4 button { background: #3d4044; border-top: 1px solid #54575a; }
.grid4 svg { color: #292b2e; }
.db { height: 14px; margin: 6px 0 7px; padding-right: 6px; color: #d6d7d7; }
.fader { display: grid; grid-template-columns: 12px 15px 21px 1fr; width: 77px; height: 104px; }
.scale { display: flex; flex-direction: column; align-items: flex-end; padding: 12px 2px 0 0; font: bold 8px/8px "Liberation Sans", Arial, sans-serif; color: #b3b4b5; }
.scale span:nth-child(2), .scale span:nth-child(3), .scale span:nth-child(6) { margin-bottom: 4px; }
.scale span:nth-child(4) { margin-bottom: 2px; }
.scale span:nth-child(5) { margin-bottom: 5px; }
.vu { background: #1d1f23; border: 1px solid #121315; border-radius: 2px; }
.fader input { writing-mode: vertical-lr; direction: rtl; width: 18px; height: 104px; margin-left: 3px;
  background: linear-gradient(#17181a, #17181a) 8px 16px / 2px 71px no-repeat, linear-gradient(#666, #666) 3px 25px / 12px 1px no-repeat, linear-gradient(#666, #666) 3px 76px / 12px 1px no-repeat, linear-gradient(#54565b, #54565b) 2px 60px / 14px 44px no-repeat; }
.fader input::-webkit-slider-thumb { appearance: none; width: 18px; height: 37px; border: 1px solid #222; border-radius: 2px; box-shadow: 0 1px 2px #000;
  background: linear-gradient(#fff 0 2px, #777 2px 3px, #b5b5b5 4px, #fff 14px, #fff 16px, #333 17px 18px, #fff 18px 27px, #9a9a9a 31px, #fff 32px 33px, #999 34px, #fff 35px); }
.fright { display: flex; flex-direction: column; justify-content: space-between; align-items: flex-end; padding: 0 5px 2px 0; color: #5a5854; }
.fright svg:first-child { margin-right: 4px; }
.nrow { display: flex; justify-content: space-between; align-items: flex-end; width: 100%; height: 20px; padding: 0 5px 0 13px; font-weight: bold; color: #c9caca; }
.nrow svg { color: #a9abac; }
.read { width: 71px; height: 17px; margin-top: 5px; border: 1px solid #93ba86; border-radius: 1px; background: #7fa973; color: #1f271d; }
.sname { height: 14px; margin-top: 1px; border-radius: 0 0 6px 6px; color: #f3f3f3; text-align: center; white-space: nowrap; overflow: hidden; }
.stripscroll { display: flex; height: 19px; border-top: 2px solid #111214; padding-left: 6px; background: #26272b; }

/* transport */
.transport { margin-bottom: 7px; padding-left: 151px; border-top: 1px solid #222; background: var(--panel); box-shadow: 0 1px #2c2e31, 0 5px #292b2d; }
.tbody { display: flex; height: 44px; padding: 3px 0 0 19px; overflow: hidden; background: #161717; clip-path: polygon(0 0, 100% 0, 100% 100%, 10px 100%); white-space: nowrap; }
.cell { display: flex; flex-direction: column; flex: none; height: 34px; padding-top: 2px; color: #a3a4a5; }
.cell b, .cell em { color: #e6e6e6; font-style: normal; }
.cell b { height: 17px; line-height: 17px; font-weight: 400; font-size: 13px; }
.cell > span, .cell em { margin-top: auto; }
.cell .tri { margin-left: 7px; }
.midi { align-items: center; width: 24px; padding-top: 3px; }
.perf { width: 62px; margin-left: 15px; padding-top: 5px; }
.meter { width: 65px; height: 5px; margin: 0 0 2px -3px; background: linear-gradient(90deg, #2c3033 60px, #1f2123 0); }
.ring { margin: 5px 14px 0 17px; }
.rate { width: 68px; }
.days { width: 85px; }
.secs { width: 84px; align-items: center; margin-right: 24px; }
.secs b { font-size: 14px; }
.time { width: 139px; align-items: center; }
.time b { font-size: 20px; font-weight: bold; color: #d3d4d5; }
.controls { display: flex; align-items: center; height: 34px; margin-left: 15px; gap: 12px; color: #cacbcb; }
.controls button:nth-child(4) { margin-left: -3px; }
.controls button:nth-child(5) { margin-left: 2px; }
.stop { width: 21px; height: 21px; margin: 0 6px 0 8px; background: #31b0dc; }
.rec { margin-left: 3px; }
```

FILE: app.js
```
const C = { purple: '#9d1ab2', green: '#2acb2a', red: '#cb2a2a', blue: '#2a89d8', lime: '#b9cb22', fiddle: '#247bc2' };
const icon = (id, w, h) => `<svg width="${w}" height="${h}"><use href="#${id}"/></svg>`;
const put = (id, html) => { document.getElementById(id).innerHTML = html; };

/* track headers */
const groupHead = (name, color, open) => `
<div class="head group"><div class="strip-col" style="background:${color}"><span><i class="tri small ${open ? 'up' : ''}"></i></span></div>
<div class="hbody"><span></span><div class="msr"><button>M</button><button>S</button><button aria-label="Record">${icon('dot', 10, 10)}</button><button aria-label="Monitor">${icon('monitor', 10, 10)}</button></div>
<div class="nm">${name}${icon(open ? 'folderopen' : 'folder', 18, 12)}</div>
<div class="under"><label class="drop"><select aria-label="Bus"><option>None</option></select><i class="tri dim"></i></label><button aria-label="Group">${icon('players', 12, 11)}</button></div></div></div>`;
const audioHead = (n, name, color, child) => `
<div class="head audio ${child ? 'child' : ''}"><div class="strip-col" style="background:${color}"><span>${icon('env', 8, 7)}</span></div>
<div class="hbody"><span class="num">${n}</span><div class="msr"><button>M</button><button>S</button><span class="lvl"></span></div>
<div class="nm">${name}${icon('wave', 16, 14)}</div>
<button class="pw" aria-label="Enable">${icon('power', 13, 13)}</button><div class="under"><span></span><label class="drop"><select aria-label="Display"><option>Display: Off</option></select><i class="tri dim"></i></label></div>
<input class="vol" type="range" min="0" max="100" value="0" aria-label="Volume"></div></div>`;
put('heads', groupHead('Percussions', C.purple) + audioHead(4, 'Acoustic Bass', C.green) + audioHead(5, 'Acoustic ..itar', C.red)
  + groupHead('Fiddle', C.fiddle, true) + audioHead(6, 'Fiddle Pad1', C.blue, true) + audioHead(7, 'Fiddle ..ad 2', C.blue, true)
  + audioHead(8, 'Fiddle ..ad 3', C.blue, true) + groupHead('Mandolin', C.lime));

/* ruler and markers */
put('ruler', Array.from({ length: 20 }, (_, i) => `<div class="bar2 ${i % 2 ? '' : 'long'}">${i * 2 + 1}</div>`).join(''));
put('markers', `<div class="mk start"><span>Start</span></div>` + ['Verse', 'Chorus', 'Turnaround'].map(m => `<div class="mk"><span>${m}</span></div>`).join(''));

/* waveforms */
let seed = 7;
const rnd = () => (seed = (seed * 16807) % 2147483647) / 2147483647;
const outline = (pts, mid, fill) => {
  const top = pts.map(([x, u]) => `${x} ${(mid - u).toFixed(1)}`);
  const low = pts.map(([x, , d]) => `${x} ${(mid + d).toFixed(1)}`).reverse();
  return `<path d="M${top.join('L')}L${low.join('L')}z" fill="${fill}"/><path d="M0 ${mid}H244" stroke="${fill}" stroke-width=".6"/>`;
};
const smooth = env => {
  const out = [];
  for (let i = 0; i < env.length - 1; i++) {
    const [x0, u0, d0] = env[i], [x1, u1, d1] = env[i + 1];
    for (let x = x0; x < x1; x++) {
      const t = (x - x0) / (x1 - x0), j = u0 + u1 > 6 ? rnd() * 1.2 : 0;
      out.push([x, u0 + (u1 - u0) * t + j, d0 + (d1 - d0) * t + j]);
    }
  }
  return out;
};
const hits = (amps, decay) => {
  const step = 245 / amps.length, out = [];
  for (let x = 0; x < 244; x++) {
    const k = Math.floor(x / step), t = (x - k * step) / step;
    const a = Math.max(.4, amps[k] * (t < .12 ? .6 : Math.exp(-t * decay))), r = .75 + rnd() * .5;
    out.push([x, a * r, a * r * .95]);
  }
  return out;
};
const e = s => s.split(' ').map(p => p.split(',').map(Number));
const fiddle = [
  ['0,1,1 8,11,8 15,15,14 20,17,20 24,17,22 28,17,18 31,6,5 32,5,5 35,14,13 42,16,18 50,15,18 58,15,15 61,12,10 63,3,3 70,9,9 78,12,13 86,11,13 90,10,8 92,3,2 100,8,8 108,11,12 113,11,14 118,7,7 121,1,1 125,4,4 135,10,10 145,16,12 149,17,14 152,14,13 154,5,5 162,13,13 172,14,15 180,14,16 184,13,12 186,3,4 192,7,9 200,10,12 208,11,12 213,11,11 215,3,2 220,4,4 228,9,12 231,10,13 236,9,11 240,5,5 243,2,2',
   '0,3,2 8,12,11 20,13,12 28,10,8 30,3,3 35,6,5 44,11,10 55,12,13 60,11,11 62,3,3 70,7,6 78,11,10 87,7,9 90,9,6 92,2,2 98,8,8 106,16,16 112,17,19 118,17,19 120,16,18 122,4,4 130,7,7 138,10,9 146,9,8 158,3,3 165,0,0 184,0,0 190,3,3 196,13,11 205,12,9 215,12,11 220,7,8 226,0,0 229,0,0 231,7,9 234,15,15 238,12,13 242,12,12 243,0,0',
   '0,1,1 8,4,4 18,7,6 25,11,10 29,13,20 30,12,16 32,4,4 36,11,10 44,13,14 54,13,13 60,14,12 62,2,2 70,5,5 80,11,13 88,11,14 91,6,6 92,4,3 98,10,10 104,17,18 112,17,18 120,16,14 122,2,2 130,6,6 141,12,11 150,8,8 161,3,3 163,2,2'],
  ['0,0,0 4,1,1 10,8,7 18,14,12 26,17,13 30,14,12 32,2,1 38,6,6 46,8,10 56,8,11 62,1,2 70,10,7 80,13,12 88,13,13 92,8,6 94,1,2 104,5,4 112,10,9 116,11,17 118,9,8 121,1,1 130,8,6 140,16,14 148,15,12 152,15,12 154,3,3 165,6,9 175,6,9 186,5,7 200,10,9 212,11,9 215,3,2 226,1,1 232,6,7 235,13,10 240,7,8 243,1,2',
   '0,3,1 8,8,7 20,12,9 26,15,11 29,9,9 30,7,7 40,10,10 50,8,9 58,11,14 60,6,6 70,11,10 80,8,10 89,12,13 92,6,6 100,13,12 108,15,17 116,16,17 120,14,16 122,6,4 132,9,7 140,9,9 148,7,7 158,2,2 165,0,0 184,0,0 190,3,4 197,13,10 206,15,12 215,12,8 222,7,6 226,1,1 228,1,1 231,9,11 234,14,16 238,10,12 241,4,5 243,7,3',
   '0,0,0 8,5,4 16,15,9 22,17,12 28,17,13 31,2,4 38,8,7 44,11,9 52,9,12 56,8,7 60,13,8 66,6,5 76,8,6 84,10,8 90,13,9 92,3,2 100,7,7 110,9,13 120,11,7 122,1,1 132,6,7 146,11,14 160,2,2 163,1,1'],
  ['0,0,1 8,7,6 16,9,9 24,9,10 30,9,9 32,2,2 40,7,8 50,11,12 58,12,14 61,7,7 63,2,3 72,7,6 80,9,8 88,8,7 93,1,2 100,8,11 110,9,13 118,8,12 121,3,1 126,2,3 138,9,8 147,13,13 152,10,11 154,3,2 162,8,9 172,10,12 182,11,12 185,3,3 196,6,6 204,8,6 212,7,6 215,1,1 222,6,5 228,6,9 236,8,10 243,7,10',
   '0,3,2 8,6,7 20,9,12 29,12,15 31,2,4 42,7,8 50,8,10 60,9,11 62,3,3 78,6,4 88,5,4 90,13,6 92,2,2 100,7,8 115,9,13 119,5,9 121,3,4 130,9,9 142,9,9 152,6,7 160,2,2 165,0,0 184,0,0 194,8,6 204,12,10 212,13,12 220,9,7 226,1,0 229,1,0 231,8,8 234,11,7 238,7,8 240,11,15 243,9,13',
   '0,1,1 8,4,5 20,10,9 26,12,14 29,9,12 32,2,2 42,8,8 52,9,11 60,8,8 62,2,1 72,8,8 82,8,10 90,8,8 92,1,1 104,7,9 114,8,11 121,8,8 122,3,2 134,7,8 144,10,7 154,8,7 163,4,4'],
];
const bassAmps = [
  [9, 2, 6, 3, 4.5, 4, 4, 5, 5, 4.5, 4.5, 4, 4, 4, 3, 3, 8, 7, 6, 6, 6.5, 5, 4.5, 7, 5, 6, 4, 6, 5, 4, 2.5, 1],
  [12, 0, 13, 9, 5, 11, 4, 3, 2, 10, 4, 9, 9, 9, 0, 12, 8, 0, 12, 6, 10, 10, 4, 13, 4, 10, 12, 5, 2, 1, 8, 9],
  [6, 5, 5, 4, 4, 5, 4, 5, 5, 4, 5, 4, 7, 5, 3, 1, 13, 9, 10, 0, 13, 9, 11, 0, 11, 5, 10, 9, 8, 3, 11, 4],
];
const guitarAmps = [
  [7, 10, 8, 12, 8, 8, 9, 9, 8, 7, 6, 5, 4, 6, 8, 14, 11, 11, 12, 14, 9, 6, 6, 9, 7, 5, 7, 7, 4, 4, 5, 11],
  [8, 9, 12, 9, 6, 8, 8, 9, 8, 10, 7, 7, 11, 9, 7, 7, 9, 8, 6, 6, 4, 3, 12, 11, 9, 8, 11, 8, 7, 13, 11, 13],
  [6, 4, 5, 10, 4, 5, 5, 6, 5, 8, 5, 6, 5, 5, 7, 10, 6, 7, 8, 6, 10, 8, 6, 6, 6, 6, 6, 6, 6, 6, 6, 6],
];
const stereo = (amps, decay, fill) => outline(hits(amps, decay), 15.5, fill) + outline(hits(amps, decay), 43.5, fill);
const fade = `<path d="M0 0h10L0 10z" fill="#fff3"/><path d="M234 0h10v10z" fill="#8884"/>`;
const svg = inner => `<svg width="244" height="59" viewBox="0 0 244 59">${inner}</svg>`;
const perc = i => {
  let s = '';
  [9, 25, 40].forEach(y => { s += `<path d="M4 ${y}h237v12H4z" fill="#b850c6"/>`; });
  s += '<path d="M4 12.500h237M4 16.500h237M4 31h237M4 43.500h237M4 47.500h237" stroke="#8d2a9c" stroke-width=".6"/>';
  let d = '';
  for (let k = 0; k < 31; k++) {
    const x = 7 + Math.round(k * 7.7);
    d += `M${x} 11h1v3h-1zM${x - 1} 12h2v1h-2z`;
    if (k % 2 === 0) {
      d += `M${x} 15h1v3h-1zM${x - 1} 30h1v-1h2v1h1v2h-1v1h-2v-1h-1z`;
      if ((k * 7 + i * 5) % 9) d += `M${x} 42h1v3h-1zM${x} 46h1v3h-1z`;
    }
  }
  return s + `<path d="${d}" fill="#56105f"/>`;
};
const clip = (label, bg, tab, inner, folder) => `<div class="clip" style="background:${bg}">${inner ? svg(inner) : ''}<b style="background:${tab}">${label}</b>${folder ? `<span class="ftab" style="background:${tab}"></span>` : ''}</div>`;
const lane = fn => `<div class="lane">${['Verse', 'Chorus', 'Turnaround'].map(fn).join('')}</div>`;
put('lanes',
  lane((s, i) => clip('Percussions', C.purple, '#5b1168', perc(i), true))
  + lane((s, i) => clip(`05 AcBass ${s}-01`, C.green, '#1d7a1d', stereo(bassAmps[i], 1.3, '#145214') + fade))
  + lane((s, i) => clip(`05 AcGuitar ${s}-01`, C.red, '#791818', stereo(guitarAmps[i], 1.3, '#521010') + fade))
  + lane(() => clip('Fiddle', C.fiddle, '#164a75', '', true))
  + [1, 2, 3].map(n => lane((s, i) => clip(`05 FiddlePad${n} ${s}.wav-01`, '#2878cb', '#19497b', outline(smooth(e(fiddle[n - 1][i])), 29.5, '#112f50') + fade))).join('')
  + lane(() => clip('Mandolin', C.lime, '#6f7a14', '')));

/* channel list */
const list = [['Djembe', 'purple'], ['Tamb..rine', 'purple'], ['Shaker', 'purple'], ['Aco..Bass', 'green'], ['Acous..itar', 'red'],
  ['Fid..Pad1', 'blue'], ['Fiddl..ad 2', 'blue'], ['Fiddl..ad 3', 'blue'], ['Mandolin', 'lime'], ['Man..Solo', 'lime']];
put('rows', list.map(([n, c], i) => `<tr><td>${i + 1}</td><td></td><td>${icon('dot', 7, 7)}</td><td>${icon('sine', 12, 8)}</td><td><i style="background:${C[c]}"></i></td><td class="name">${n}</td><td></td></tr>`).join(''));

/* channel strips: name, colour, pan text, pan bar [left, right], level, fader offset */
const strips = [
  ['Djembe', 'purple', '&lt;L&gt;|&lt;R&gt;', null, '-10.8', 32],
  ['Tambourine', 'purple', 'L8', [35, 37], '-17.4', 37],
  ['Shaker', 'purple', 'R6', [40, 42], '-14.4', 35],
  ['Acoustic Bass', 'green', '&lt;L&gt;|&lt;R&gt;', null, '-7.0', 27],
  ['Acoustic Guitar', 'red', 'L20', [30, 38], '-8.5', 29],
  ['Fiddle Pad1', 'blue', 'R30', [39, 50], '-15.0', 36],
  ['Fiddle Pad 2', 'blue', '&lt;C&gt;|&lt;C&gt;', [38, 39], '-11.0', 32],
];
const spread = ([a, b]) => {
  if (b - a < 3) return `<path d="M${a} 1h${b - a}v14h-${b - a}z" fill="#36bde8"/>`;
  const left = a < 38 && b <= 38;
  return `<path d="M${a} 1h${b - a}v14h-${b - a}z" fill="#36bde8"/>`
    + (left ? `<path d="M${a + 2} 2h${b - a - 3}v12z" fill="#174a5a"/>` : `<path d="M${b - 2} 2h-${b - a - 3}v12z" fill="#174a5a"/>`);
};
const panner = p => `<svg class="panner" width="77" height="16">` + (p
  ? `<path d="M0 0h77v16H0z" fill="#0c0c0d"/><path d="M1 1v14h37zM76 1v14H39z" fill="#1d1e1f"/>${spread(p)}`
  : `<path d="M0 0h77v16H0z" fill="#0a1013"/><path d="M1 1h75v14H1z" fill="#083c4c"/><path d="M1 1v14h37zM76 1v14H39z" fill="#36bde8"/>`)
  + '<path d="M38.500 1v14" stroke="#555"/></svg>';
const vu = `<svg class="vu" width="15" height="104" viewBox="0 0 15 104"><path d="M2 14.500h11M2 22.500h11M2 47.500h11M2 58.500h11M2 70.500h11M2 83.500h11M2 91.500h11M2 98.500h11" stroke="#234a66"/><path d="M2 35.500h11" stroke="#8c979d"/></svg>`;
const rack = (t, cls) => `<div class="rack ${cls}">${icon('power', 13, 13)}<span>${t}</span><button aria-label="${t} menu"><i class="tri small"></i></button><button aria-label="Add to ${t}">${icon('plus', 9, 9)}</button></div>`;
put('strips', strips.map(([n, c, pan, bar, db, off], i) => `
<article class="strip"><div class="cbar" style="background:${C[c]}"></div>${rack('Inserts', 'inserts')}${rack('Sends', 'sends')}<div class="cbar" style="background:${C[c]}"></div>
<div class="sbody"><button class="route">None</button><button class="route">Main Out</button>${panner(bar)}
<div class="pan"><i class="tri"></i>${pan.split('|').map(t => `<span>${t}</span>`).join('')}</div>
<div class="grid4"><button>M</button><button>S</button><button aria-label="Record">${icon('dot', 10, 10)}</button><button aria-label="Monitor">${icon('monitor', 10, 10)}</button></div>
<div class="db">${db}</div>
<div class="fader"><div class="scale"><span>10</span><span>6</span><span>0</span><span>-6</span><span>-12</span><span>-24</span><span>-36</span><span>-48</span></div>${vu}<input type="range" min="0" max="67" value="${67 - off}" aria-label="${n} level"><div class="fright">${icon('bars3', 12, 12)}${icon('link', 17, 17)}</div></div>
<div class="nrow"><span>${i + 1}</span>${icon('wave', 16, 14)}</div><button class="read">Read</button></div>
<div class="sname" style="background:${C[c]}">${n}</div></article>`).join(''));
```
